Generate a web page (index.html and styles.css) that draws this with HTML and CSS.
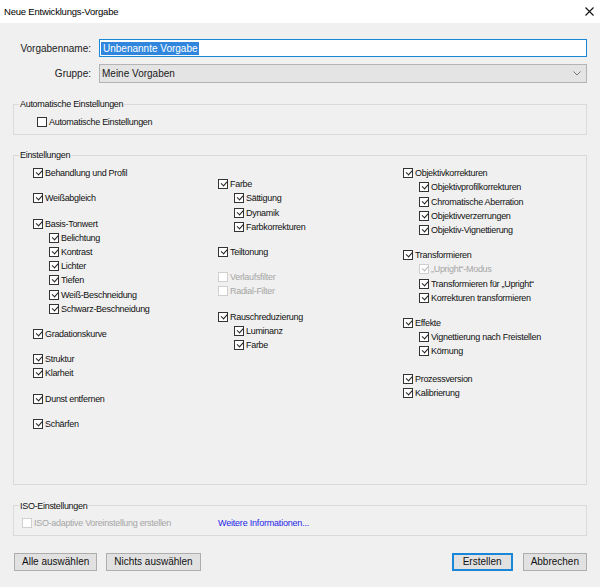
FILE: index.html
```html
<!DOCTYPE html>
<html lang="de">
<head>
<meta charset="utf-8">
<title>Neue Entwicklungs-Vorgabe</title>
<link rel="stylesheet" href="styles.css">
</head>
<body>
<div class="window">
  <div class="titlebar">
    <span class="title">Neue Entwicklungs-Vorgabe</span>
    <svg class="close" width="9" height="9" viewBox="0 0 9 9"><path d="M0.5 0.5 L8.5 8.5 M8.5 0.5 L0.5 8.5" stroke="#111" stroke-width="1.1" fill="none"/></svg>
  </div>
  <div class="content">
    <div class="form">
      <span class="flabel">Vorgabenname:</span>
      <div class="textbox"><span class="sel">Unbenannte Vorgabe</span></div>
      <span class="flabel">Gruppe:</span>
      <div class="select"><span>Meine Vorgaben</span><svg class="chev" width="8" height="5" viewBox="0 0 8 5"><path d="M0.5 0.5 L4 4 L7.5 0.5" stroke="#7a7a7a" stroke-width="1" fill="none"/></svg></div>
    </div>

    <fieldset class="box box-auto">
      <legend>Automatische Einstellungen</legend>
      <div class="box-body">
        <div class="row"><span class="cb"></span><span class="lbl">Automatische Einstellungen</span></div>
      </div>
    </fieldset>

    <fieldset class="box box-settings">
      <legend>Einstellungen</legend>
      <div class="box-body cols">
        <div class="col">
          <div class="group"><div class="row"><span class="cb on"></span><span class="lbl">Behandlung und Profil</span></div></div>
          <div class="group"><div class="row"><span class="cb on"></span><span class="lbl">Weißabgleich</span></div></div>
          <div class="group">
            <div class="row"><span class="cb on"></span><span class="lbl">Basis-Tonwert</span></div>
            <div class="row sub"><span class="cb on"></span><span class="lbl">Belichtung</span></div>
            <div class="row sub"><span class="cb on"></span><span class="lbl">Kontrast</span></div>
            <div class="row sub"><span class="cb on"></span><span class="lbl">Lichter</span></div>
            <div class="row sub"><span class="cb on"></span><span class="lbl">Tiefen</span></div>
            <div class="row sub"><span class="cb on"></span><span class="lbl">Weiß-Beschneidung</span></div>
            <div class="row sub"><span class="cb on"></span><span class="lbl">Schwarz-Beschneidung</span></div>
          </div>
          <div class="group"><div class="row"><span class="cb on"></span><span class="lbl">Gradationskurve</span></div></div>
          <div class="group">
            <div class="row"><span class="cb on"></span><span class="lbl">Struktur</span></div>
            <div class="row"><span class="cb on"></span><span class="lbl">Klarheit</span></div>
          </div>
          <div class="group"><div class="row"><span class="cb on"></span><span class="lbl">Dunst entfernen</span></div></div>
          <div class="group"><div class="row"><span class="cb on"></span><span class="lbl">Schärfen</span></div></div>
        </div>

        <div class="col col-offset">
          <div class="group">
            <div class="row"><span class="cb on"></span><span class="lbl">Farbe</span></div>
            <div class="row sub"><span class="cb on"></span><span class="lbl">Sättigung</span></div>
            <div class="row sub"><span class="cb on"></span><span class="lbl">Dynamik</span></div>
            <div class="row sub"><span class="cb on"></span><span class="lbl">Farbkorrekturen</span></div>
          </div>
          <div class="group"><div class="row"><span class="cb on"></span><span class="lbl">Teiltonung</span></div></div>
          <div class="group">
            <div class="row dis"><span class="cb"></span><span class="lbl">Verlaufsfilter</span></div>
            <div class="row dis"><span class="cb"></span><span class="lbl">Radial-Filter</span></div>
          </div>
          <div class="group">
            <div class="row"><span class="cb on"></span><span class="lbl">Rauschreduzierung</span></div>
            <div class="row sub"><span class="cb on"></span><span class="lbl">Luminanz</span></div>
            <div class="row sub"><span class="cb on"></span><span class="lbl">Farbe</span></div>
          </div>
        </div>

        <div class="col">
          <div class="group">
            <div class="row"><span class="cb on"></span><span class="lbl">Objektivkorrekturen</span></div>
            <div class="row sub"><span class="cb on"></span><span class="lbl">Objektivprofilkorrekturen</span></div>
            <div class="row sub"><span class="cb on"></span><span class="lbl">Chromatische Aberration</span></div>
            <div class="row sub"><span class="cb on"></span><span class="lbl">Objektivverzerrungen</span></div>
            <div class="row sub"><span class="cb on"></span><span class="lbl">Objektiv-Vignettierung</span></div>
          </div>
          <div class="group">
            <div class="row"><span class="cb on"></span><span class="lbl">Transformieren</span></div>
            <div class="row sub dis"><span class="cb on"></span><span class="lbl">„Upright“-Modus</span></div>
            <div class="row sub"><span class="cb on"></span><span class="lbl">Transformieren für „Upright“</span></div>
            <div class="row sub"><span class="cb on"></span><span class="lbl">Korrekturen transformieren</span></div>
          </div>
          <div class="group">
            <div class="row"><span class="cb on"></span><span class="lbl">Effekte</span></div>
            <div class="row sub"><span class="cb on"></span><span class="lbl">Vignettierung nach Freistellen</span></div>
            <div class="row sub"><span class="cb on"></span><span class="lbl">Körnung</span></div>
          </div>
          <div class="group group-late">
            <div class="row"><span class="cb on"></span><span class="lbl">Prozessversion</span></div>
            <div class="row"><span class="cb on"></span><span class="lbl">Kalibrierung</span></div>
          </div>
        </div>
      </div>
    </fieldset>

    <fieldset class="box box-iso">
      <legend>ISO-Einstellungen</legend>
      <div class="box-body iso-row">
        <div class="row dis"><span class="cb"></span><span class="lbl">ISO-adaptive Voreinstellung erstellen</span></div>
        <a class="link" href="#">Weitere Informationen...</a>
      </div>
    </fieldset>

    <div class="buttons">
      <div class="btn-group">
        <button class="btn">Alle auswählen</button>
        <button class="btn">Nichts auswählen</button>
      </div>
      <div class="btn-group btn-group-right">
        <button class="btn btn-default">Erstellen</button>
        <button class="btn">Abbrechen</button>
      </div>
    </div>
  </div>
</div>
</body>
</html>
```

FILE: styles.css
```css
* { box-sizing: border-box; }

html, body {
  margin: 0;
  padding: 0;
  width: 600px;
  height: 587px;
  overflow: hidden;
  background: #f0f0f0;
  font-family: "Liberation Sans", Arial, sans-serif;
  color: #111;
}

.window {
  width: 600px;
  height: 587px;
  display: flex;
  flex-direction: column;
}

.titlebar {
  height: 23px;
  background: #fff;
  display: flex;
  align-items: center;
  justify-content: space-between;
  padding: 0 6px 1px 4px;
}

.title {
  font-size: 9.5px;
  letter-spacing: -0.2px;
  color: #000;
}

.close { display: block; }

.content {
  padding: 16px 13px 0 13px;
  display: flex;
  flex-direction: column;
}

/* Top form */
.form {
  display: grid;
  grid-template-columns: 78px 1fr;
  column-gap: 8px;
  row-gap: 7px;
  align-items: center;
}

.flabel {
  font-size: 10px;
  text-align: right;
  color: #1a1a1a;
}

.textbox {
  height: 18px;
  background: #fff;
  border: 1px solid #1a86d8;
  padding: 1px 1px;
  display: flex;
  align-items: center;
}

.sel {
  background: #2f86dc;
  color: #fff;
  font-size: 10px;
  line-height: 13px;
  padding: 0 1px 0 2px;
}

.select {
  height: 19px;
  background: #e4e4e4;
  border: 1px solid #b4b4b4;
  display: flex;
  align-items: center;
  justify-content: space-between;
  padding: 0 5px 0 2px;
  font-size: 10px;
  color: #1a1a1a;
}

.chev { display: block; }

/* Group boxes */
.box {
  margin: 0;
  padding: 0;
  border: 1px solid #dadada;
  min-inline-size: 0;
}

.box legend {
  font-size: 9px;
  letter-spacing: -0.3px;
  line-height: 12px;
  padding: 0 1px;
  margin-left: 5px;
  color: #111;
}

.box-auto { margin-top: 15px; }
.box-auto .box-body { padding: 5px 0 5px 23px; }

.box-settings { margin-top: 14px; }
.box-settings .box-body { padding: 5px 0 53px 19px; }

.box-iso { margin-top: 15px; }
.box-iso .box-body { padding: 4px 0 5px 8px; }

/* Checkbox rows */
.cols {
  display: grid;
  grid-template-columns: 185px 185px 1fr;
}

.col {
  display: flex;
  flex-direction: column;
  gap: 11px;
}

.col-offset { padding-top: 11px; }

.group {
  display: flex;
  flex-direction: column;
}

.group-late { margin-top: 2px; }

.row {
  height: 14.2px;
  display: flex;
  align-items: center;
  font-size: 9px;
  letter-spacing: -0.3px;
  color: #111;
  white-space: nowrap;
}

.row.sub { padding-left: 16px; }

.cb {
  position: relative;
  flex: none;
  width: 10px;
  height: 10px;
  border: 1px solid #333;
  background: #fff;
  margin-right: 2px;
}

.cb.on::after {
  content: "";
  position: absolute;
  left: 1.5px;
  top: 1px;
  width: 5px;
  height: 2.6px;
  border-left: 1.2px solid #222;
  border-bottom: 1.2px solid #222;
  transform: rotate(-48deg);
}

.row.dis { color: #a6a6a6; }
.row.dis .cb { border-color: #cfcfcf; }
.row.dis .cb.on::after { border-color: #b8b8b8; }

.iso-row {
  display: grid;
  grid-template-columns: 196px 1fr;
  align-items: center;
}

.link {
  font-size: 9px;
  letter-spacing: -0.2px;
  color: #2424e8;
  text-decoration: none;
}

/* Buttons */
.buttons {
  margin-top: 17px;
  display: flex;
  justify-content: space-between;
  padding-left: 1px;
}

.btn-group {
  display: flex;
  gap: 9px;
}

.btn-group-right { gap: 10px; }

.btn {
  height: 18px;
  min-width: 61px;
  padding: 0 7px;
  margin: 0;
  border: 1px solid #adadad;
  background: #e1e1e1;
  font-family: "Liberation Sans", Arial, sans-serif;
  font-size: 10px;
  color: #111;
  line-height: 16px;
}

.btn-default {
  border: 2px solid #1a86d8;
  line-height: 14px;
}
```
